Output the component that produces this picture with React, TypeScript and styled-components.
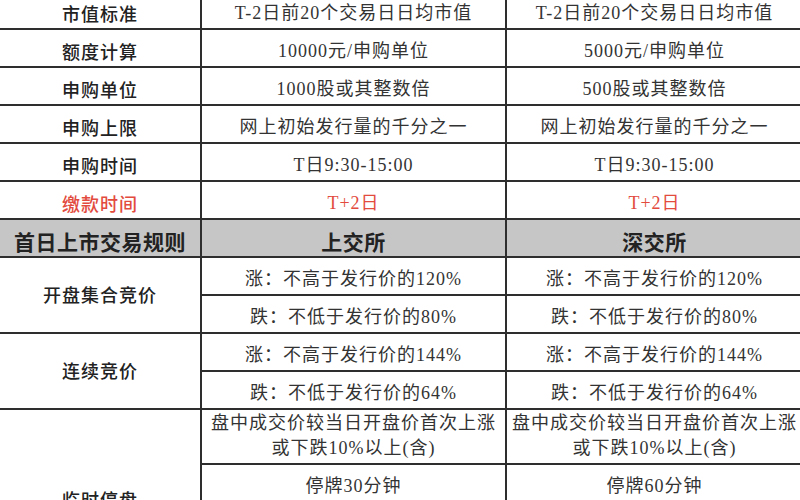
import styled, { createGlobalStyle } from "styled-components";

const GlobalStyle = createGlobalStyle`
  html, body {
    margin: 0;
    padding: 0;
    background: #fff;
    overflow: hidden;
  }
  body {
    width: 800px;
    height: 500px;
  }
`;

const Sheet = styled.table`
  width: 804px;
  margin: -10px 0 0 -2px;
  border-collapse: collapse;
  table-layout: fixed;
  font-family: "Liberation Serif", "Noto Sans CJK SC", serif;
  font-size: 18px;
  color: #333;
`;

const Col = styled.col<{ $w: number }>`
  width: ${(p) => p.$w}px;
`;

const Row = styled.tr<{ $h?: number; $head?: boolean }>`
  height: ${(p) => p.$h ?? 38}px;
  background: ${(p) => (p.$head ? "#c6c6c6" : "transparent")};
`;

const Cell = styled.td<{ $red?: boolean; $mid?: boolean }>`
  border: 2px solid #2e2e2e;
  padding: 0 0 2px;
  text-align: center;
  vertical-align: ${(p) => (p.$mid ? "middle" : "bottom")};
  line-height: 25px;
  letter-spacing: 1px;
  white-space: nowrap;
  color: ${(p) => (p.$red ? "#e24b3e" : "#333")};
`;

const Label = styled(Cell)`
  font-family: "Noto Sans CJK SC", sans-serif;
  font-weight: 500;
  color: ${(p) => (p.$red ? "#e24b3e" : "#222")};
`;

const Head = styled(Label)`
  font-size: 21px;
  font-weight: 700;
  letter-spacing: 0.5px;
  color: #222;
`;

type Pair = [string, string, string];

const basics: Pair[] = [
  ["市值标准", "T-2日前20个交易日日均市值", "T-2日前20个交易日日均市值"],
  ["额度计算", "10000元/申购单位", "5000元/申购单位"],
  ["申购单位", "1000股或其整数倍", "500股或其整数倍"],
  ["申购上限", "网上初始发行量的千分之一", "网上初始发行量的千分之一"],
  ["申购时间", "T日9:30-15:00", "T日9:30-15:00"],
];

export default function App() {
  return (
    <>
      <GlobalStyle />
      <Sheet>
        <colgroup>
          <Col $w={202} />
          <Col $w={305} />
          <Col $w={297} />
        </colgroup>
        <tbody>
          {basics.map(([label, sh, sz]) => (
            <Row key={label}>
              <Label>{label}</Label>
              <Cell>{sh}</Cell>
              <Cell>{sz}</Cell>
            </Row>
          ))}
          <Row>
            <Label $red>缴款时间</Label>
            <Cell $red>T+2日</Cell>
            <Cell $red>T+2日</Cell>
          </Row>

          <Row $head>
            <Head>首日上市交易规则</Head>
            <Head>上交所</Head>
            <Head>深交所</Head>
          </Row>

          <Row>
            <Label $mid rowSpan={2}>
              开盘集合竞价
            </Label>
            <Cell>涨：不高于发行价的120%</Cell>
            <Cell>涨：不高于发行价的120%</Cell>
          </Row>
          <Row>
            <Cell>跌：不低于发行价的80%</Cell>
            <Cell>跌：不低于发行价的80%</Cell>
          </Row>

          <Row>
            <Label $mid rowSpan={2}>
              连续竞价
            </Label>
            <Cell>涨：不高于发行价的144%</Cell>
            <Cell>涨：不高于发行价的144%</Cell>
          </Row>
          <Row>
            <Cell>跌：不低于发行价的64%</Cell>
            <Cell>跌：不低于发行价的64%</Cell>
          </Row>

          <Row $h={55}>
            <Label $mid rowSpan={4}>
              临时停盘
            </Label>
            <Cell>
              盘中成交价较当日开盘价首次上涨
              <br />
              或下跌10%以上(含)
            </Cell>
            <Cell>
              盘中成交价较当日开盘价首次上涨
              <br />
              或下跌10%以上(含)
            </Cell>
          </Row>
          <Row>
            <Cell>停牌30分钟</Cell>
            <Cell>停牌60分钟</Cell>
          </Row>
          <Row $h={45}>
            <Cell>
              盘中成交价较当日开盘价首次上涨
              <br />
              或下跌20%以上(含)
            </Cell>
            <Cell>
              盘中成交价较当日开盘价首次上涨
              <br />
              或下跌20%以上(含)
            </Cell>
          </Row>
          <Row $h={36}>
            <Cell>停牌至14:57</Cell>
            <Cell>停牌至14:57</Cell>
          </Row>
        </tbody>
      </Sheet>
    </>
  );
}
